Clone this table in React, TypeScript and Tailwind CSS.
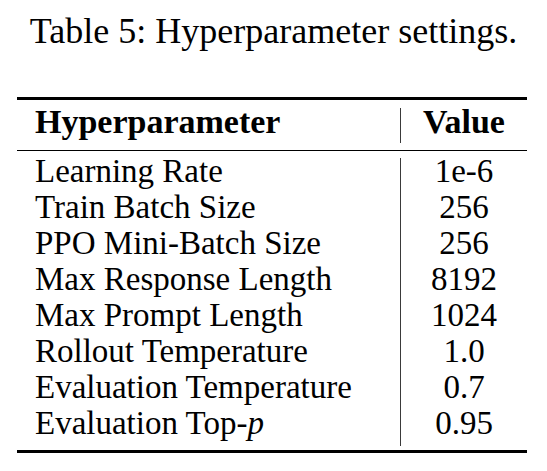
import React from "react";

const rows: [React.ReactNode, string][] = [
  ["Learning Rate", "1e-6"],
  ["Train Batch Size", "256"],
  ["PPO Mini-Batch Size", "256"],
  ["Max Response Length", "8192"],
  ["Max Prompt Length", "1024"],
  ["Rollout Temperature", "1.0"],
  ["Evaluation Temperature", "0.7"],
  [
    <>
      Evaluation Top-<i>p</i>
    </>,
    "0.95",
  ],
];

export default function App() {
  return (
    <div className="w-[547px] h-[471px] bg-white text-black font-['Liberation_Serif']">
      <div className="pt-[9px] h-[53px] text-center text-[36px] leading-[44px]">
        Table 5: Hyperparameter settings.
      </div>
      <div className="mt-[44px] ml-[17px] w-[510px]">
        <div className="h-[3px] bg-black" />
        <div className="pt-[8px] pb-[7px]">
          <div className="flex h-[35px] text-[34px] leading-[27px] font-bold">
            <div className="w-[383px] pl-[18px]">Hyperparameter</div>
            <div className="flex-1 border-l border-[#3a3a3a] text-center">Value</div>
          </div>
        </div>
        <div className="h-px bg-black" />
        <div className="pt-[7px] pb-[4px]">
          {rows.map(([label, value], i) => (
            <div key={i} className="flex h-[36px] text-[33px] leading-[27px]">
              <div className="w-[383px] pl-[18px] whitespace-nowrap">{label}</div>
              <div className="flex-1 border-l border-[#3a3a3a] text-center">{value}</div>
            </div>
          ))}
        </div>
        <div className="h-[3px] bg-black" />
      </div>
    </div>
  );
}
